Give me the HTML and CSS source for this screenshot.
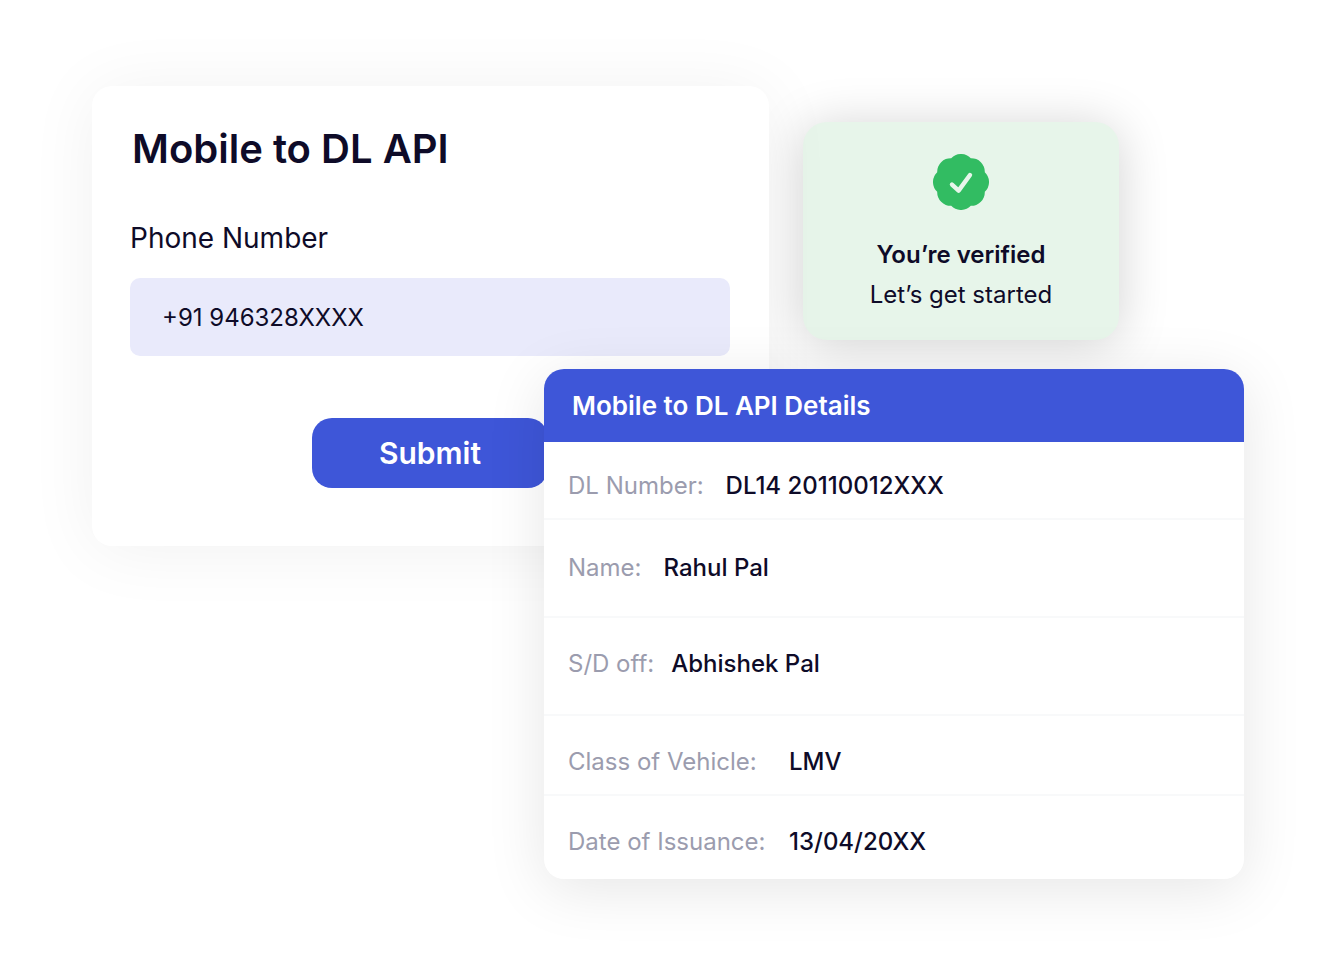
FILE: index.html
```html
<!DOCTYPE html>
<html lang="en">
<head>
  <meta charset="UTF-8">
  <meta name="viewport" content="width=device-width, initial-scale=1.0">
  <title>Mobile to DL API</title>
  <link rel="stylesheet" href="styles.css">
</head>
<body>
  <main class="stage">
    <form class="card lookup">
      <h1>Mobile to DL API</h1>
      <label for="phone">Phone Number</label>
      <input type="text" id="phone" value="+91 946328XXXX">
      <button type="button">Submit</button>
    </form>

    <section class="card verified">
      <svg class="badge" viewBox="-28 -28 56 56" aria-hidden="true">
        <path fill="#32bc62" d="M9.8-23.8A13.5 13.5 0 0 1 23.8-9.8A13.5 13.5 0 0 1 23.8 9.8A13.5 13.5 0 0 1 9.8 23.8A13.5 13.5 0 0 1-9.8 23.8A13.5 13.5 0 0 1-23.8 9.8A13.5 13.5 0 0 1-23.8-9.8A13.5 13.5 0 0 1-9.8-23.8A13.5 13.5 0 0 1 9.8-23.8Z"/>
        <path fill="none" stroke="#e7f5ea" stroke-width="4.4" stroke-linecap="round" stroke-linejoin="round" d="M-9 2.6L-2.4 8.6L9-7"/>
      </svg>
      <h2>You’re verified</h2>
      <p>Let’s get started</p>
    </section>

    <section class="card details">
      <h2>Mobile to DL API Details</h2>
      <dl>
        <div class="row"><dt>DL Number:</dt><dd>DL14 20110012XXX</dd></div>
        <div class="row tall"><dt>Name:</dt><dd>Rahul Pal</dd></div>
        <div class="row tall close"><dt>S/D off:</dt><dd>Abhishek Pal</dd></div>
        <div class="row wide"><dt>Class of Vehicle:</dt><dd>LMV</dd></div>
        <div class="row wide"><dt>Date of Issuance:</dt><dd>13/04/20XX</dd></div>
      </dl>
    </section>
  </main>
</body>
</html>
```

FILE: styles.css
```css
* {
  box-sizing: border-box;
}
body {
  margin: 0;
  background: #fff;
  color: #0e0b28;
  font-family: Inter, "Liberation Sans", sans-serif;
  font-size: 24px;
  line-height: 32px;
}
h1, h2, p, dl, dd {
  margin: 0;
}

/* the cards share one grid row so they can overlap */
.stage {
  display: grid;
  grid-template-columns: 452fr 225fr 34fr 316fr 125fr;
  align-items: start;
  padding: 86px 90px 96px 92px;
}
.card {
  grid-row: 1;
  border-radius: 20px;
}

.lookup {
  grid-column: 1 / 3;
  z-index: 2;
  display: flex;
  flex-direction: column;
  padding: 38px 39px 58px 38px;
  background: #fff;
  box-shadow: 0 4px 70px rgba(0, 0, 0, 0.06);
}
.lookup h1 {
  padding-left: 2px;
  font-size: 40px;
  line-height: 50px;
  font-weight: 600;
}
.lookup label {
  margin: 46px 0 22px;
  font-size: 28px;
  line-height: 36px;
}
.lookup input {
  width: 100%;
  height: 78px;
  padding: 0 32px;
  border: 0;
  border-radius: 10px;
  background: #e9eafb;
  color: inherit;
  font: inherit;
}
.lookup button {
  align-self: center;
  width: 236px;
  height: 70px;
  margin-top: 62px;
  border: 0;
  border-radius: 20px;
  background: #3e56d8;
  color: #fff;
  font: 600 30px Inter, "Liberation Sans", sans-serif;
}

.verified {
  grid-column: 4;
  z-index: 1;
  display: flex;
  flex-direction: column;
  align-items: center;
  margin-top: 36px;
  padding: 32px 20px 29px;
  border-radius: 24px;
  background: #e7f5ea;
  box-shadow: 0 4px 50px rgba(0, 0, 0, 0.18);
}
.badge {
  width: 56px;
  height: 56px;
  margin-bottom: 29px;
}
.verified h2 {
  margin-bottom: 8px;
  font-size: 24px;
  font-weight: 600;
}

.details {
  grid-column: 2 / 6;
  z-index: 3;
  margin-top: 283px;
  overflow: hidden;
  background: #fff;
  box-shadow: 0 10px 60px rgba(0, 0, 0, 0.1);
}
.details h2 {
  padding: 21px 28px 20px;
  background: #3e56d8;
  color: #fff;
  font-size: 26px;
  font-weight: 600;
}
.row {
  display: flex;
  gap: 22px;
  padding: 28px 24px 16px;
  border-bottom: 2px solid #f8f9fa;
}
.row.tall {
  padding: 32px 24px;
}
.row.close {
  gap: 17px;
  padding-top: 30px;
  padding-bottom: 34px;
}
.row.wide {
  padding-top: 30px;
}
.row.wide dt {
  min-width: 199px;
}
.row:last-child {
  padding-bottom: 21px;
  border-bottom: 0;
}
dt {
  color: #9b9cae;
}
dd {
  font-weight: 500;
}
```
